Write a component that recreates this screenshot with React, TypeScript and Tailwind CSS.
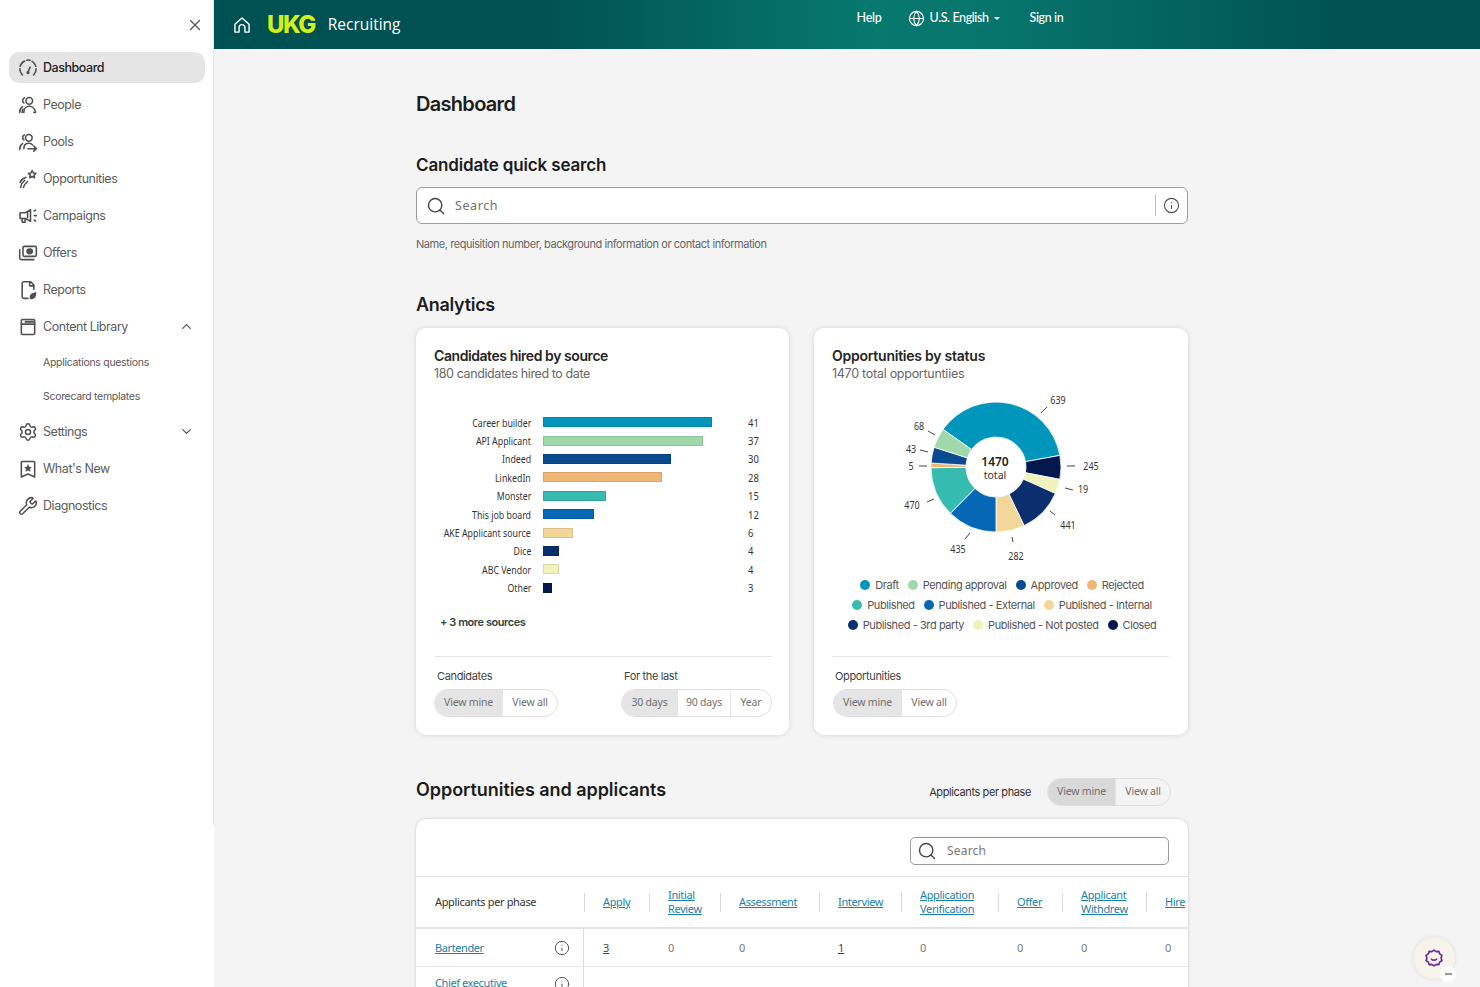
import { ChevronDown, ChevronUp, Globe, Info, Search, Settings, Wrench, X } from 'lucide-react';
import type { ReactNode } from 'react';

const uiFont = "font-['Inter',sans-serif]";
const chartFont = "font-['Noto_Sans',sans-serif]";

function Svg({ children, className = 'size-5' }: { children: ReactNode; className?: string }) {
  return (
    <svg
      viewBox="0 0 24 24"
      fill="none"
      stroke="currentColor"
      strokeWidth="1.9"
      strokeLinecap="round"
      strokeLinejoin="round"
      className={className}
    >
      {children}
    </svg>
  );
}

const icons = {
  dashboard: (
    <Svg>
      <path d="M5.200 20.200A10 10 0 0 1 2.200 13" />
      <path d="M2.600 10A10 10 0 0 1 8 3.600" />
      <path d="M10.500 2.600a10 10 0 0 1 4 .1" />
      <path d="M17 4a10 10 0 0 1 4.400 6" />
      <path d="M21.800 13a10 10 0 0 1-3 7.200" />
      <path d="M12 17l2.500-6" />
      <circle cx="12" cy="17.500" r="1" fill="currentColor" />
    </Svg>
  ),
  people: (
    <Svg>
      <circle cx="13.500" cy="7" r="4" />
      <path d="M7 21c0-4.500 2.800-7.500 6.500-7.500S20.500 16.500 21 21h-2" />
      <path d="M7.500 3.500a3.500 3.500 0 0 0-.5 6" />
      <path d="M2 21c0-3 1-5.500 3.500-7" />
      <path d="M5 21c0-1.500.5-3 1-4" />
    </Svg>
  ),
  pools: (
    <Svg>
      <circle cx="13" cy="7" r="4" />
      <path d="M7 20c0-4 2.500-6.500 6-6.500 2 0 3.500.8 4.500 2" />
      <path d="M7.500 3.500a3.500 3.500 0 0 0-.5 6" />
      <path d="M2 21c0-3 1-5.500 3.500-7" />
      <path d="M12 20h10m-3-3 3 3-3 3" />
    </Svg>
  ),
  opportunities: (
    <Svg>
      <path d="m17 2 1.400 2.800 3.100.4-2.200 2.200.5 3.100-2.800-1.500-2.800 1.500.5-3.100-2.200-2.200 3.100-.4z" />
      <path d="M3 22c.5-3 2-6 5-8.500" />
      <path d="M6.500 22c1-3 2.500-5 5-7" />
      <path d="M2.500 16c1.500-3 4-5 7-6" />
    </Svg>
  ),
  campaigns: (
    <Svg>
      <path d="M2.500 8h6.500l6-3.500v14L9 15H2.500z" />
      <path d="M5 15v4.500h3.500V15" />
      <path d="M11.500 7v7" />
      <path d="M19.500 6 21 5M19.500 11.500h2.500M19.500 17l1.500 1" />
    </Svg>
  ),
  offers: (
    <Svg>
      <rect x="6" y="4" width="16" height="12" rx="1.500" />
      <ellipse cx="14" cy="10" rx="3.200" ry="2.800" fill="currentColor" />
      <path d="M2 8v10a2 2 0 0 0 2 2h15" />
    </Svg>
  ),
  reports: (
    <Svg>
      <path d="M12 22H7a2 2 0 0 1-2-2V4a2 2 0 0 1 2-2h8l4 4v5" />
      <path d="M14 2v5h5" />
      <path d="M15 22c-.5-3 1-6 6-6.500 .5 4-1.500 7-6 6.500z" fill="currentColor" />
    </Svg>
  ),
  library: (
    <Svg>
      <rect x="4" y="3" width="16" height="18" rx="1.500" />
      <path d="M4 8.500h16" />
      <path d="M8 5.700h11" strokeWidth="2.400" strokeLinecap="butt" />
    </Svg>
  ),
  settings: <Settings className="size-5" strokeWidth={1.8} />,
  news: (
    <Svg>
      <path d="M5 3h14a1 1 0 0 1 1 1v17.500l-8-3.500-8 3.500V4a1 1 0 0 1 1-1z" />
      <path
        d="m12 7 1.300 2.600 2.800.4-2 2 .5 2.800-2.600-1.300-2.600 1.300.5-2.800-2-2 2.800-.4z"
        fill="currentColor"
        strokeWidth="0.600"
      />
    </Svg>
  ),
  diagnostics: <Wrench className="size-5" strokeWidth={1.8} />,
};

type NavEntry = {
  label: string;
  icon?: ReactNode;
  active?: boolean;
  sub?: boolean;
  chevron?: 'up' | 'down';
};

const navItems: NavEntry[] = [
  { label: 'Dashboard', icon: icons.dashboard, active: true },
  { label: 'People', icon: icons.people },
  { label: 'Pools', icon: icons.pools },
  { label: 'Opportunities', icon: icons.opportunities },
  { label: 'Campaigns', icon: icons.campaigns },
  { label: 'Offers', icon: icons.offers },
  { label: 'Reports', icon: icons.reports },
  { label: 'Content Library', icon: icons.library, chevron: 'up' },
  { label: 'Applications questions', sub: true },
  { label: 'Scorecard templates', sub: true },
  { label: 'Settings', icon: icons.settings, chevron: 'down' },
  { label: "What's New", icon: icons.news },
  { label: 'Diagnostics', icon: icons.diagnostics },
];

function Sidebar() {
  return (
    <aside className="w-[214px] shrink-0 bg-white">
      <div className="h-[825px] border-r border-[#e6e6e6] px-[9px] pr-2">
        <div className="flex h-[52px] justify-end pt-4 pr-[1px]">
          <X className="size-[18px] text-[#555]" strokeWidth={1.7} />
        </div>
        <nav className="flex flex-col gap-[6px]">
          {navItems.map((item) =>
            item.sub ? (
              <div key={item.label} className="flex h-[28px] items-center pt-[2px] pl-[34px] text-[10.5px] tracking-[-0.3px] text-[#595959]">
                {item.label}
              </div>
            ) : (
              <div
                key={item.label}
                className={
                  item.active
                    ? 'flex h-[31px] items-center rounded-[10px] bg-[#e5e5e5] pl-[9px] text-[#222] font-medium'
                    : 'flex h-[31px] items-center pl-[9px] text-[#5c5c5c]'
                }
              >
                <span className="flex w-[25px] shrink-0 text-[#505050]">{item.icon}</span>
                <span className="pt-[2px] text-[12.5px] tracking-[-0.45px]">{item.label}</span>
                {item.chevron === 'up' && <ChevronUp className="ml-auto mr-[11px] size-[15px] text-[#555]" />}
                {item.chevron === 'down' && <ChevronDown className="ml-auto mr-[11px] size-[15px] text-[#555]" />}
              </div>
            ),
          )}
        </nav>
      </div>
    </aside>
  );
}

function Header() {
  return (
    <header className="relative flex h-[49px] items-center bg-[linear-gradient(90deg,#005151_0%,#005151_25%,#07796f_52%,#07756c_62%,#005151_90%,#005151_100%)] text-white">
      <svg viewBox="0 0 24 24" fill="none" stroke="currentColor" strokeWidth="1.7" strokeLinejoin="round" className="ml-[18px] size-5">
        <path d="M3.500 11 12 3.500l8.500 7.500v9.500h-5V15a3.500 3.500 0 0 0-7 0v5.500h-5z" />
      </svg>
      <span className="ml-[15px] text-[24px] leading-none font-extrabold tracking-[-1.5px] text-[#d4f018]">UKG</span>
      <span className="ml-[13px] pt-[1px] font-['Open_Sans',sans-serif] text-[15.5px]">Recruiting</span>
      <div className="mb-[12px] ml-[456px] flex items-center font-['Lato',sans-serif] text-[12.5px] font-medium tracking-[-0.25px]">
        <span>Help</span>
        <Globe className="ml-[26px] size-[17px]" strokeWidth={1.6} />
        <span className="ml-[5px] tracking-[-0.4px]">U.S. English</span>
        <span className="ml-[5px] border-x-[3px] border-t-[3px] border-x-transparent border-t-white" />
        <span className="ml-[30px] tracking-[-0.4px]">Sign in</span>
      </div>
    </header>
  );
}

function Toggle({ options, tint = false }: { options: { label: string; width: string }[]; tint?: boolean }) {
  return (
    <div className={`flex h-[28px] w-fit overflow-hidden rounded-full border border-[#dedede] text-[10.5px] tracking-[-0.2px] text-[#707070] ${chartFont} ${tint ? '' : 'bg-white'}`}>
      {options.map((opt, i) => (
        <div
          key={opt.label}
          className={`flex items-center justify-center ${opt.width} ${i === 0 ? (tint ? 'bg-[#d9d9d9]' : 'bg-[#e5e5e5]') : 'border-l border-[#e4e4e4]'}`}
        >
          {opt.label}
        </div>
      ))}
    </div>
  );
}

const mineAll = [
  { label: 'View mine', width: 'w-[67px]' },
  { label: 'View all', width: 'w-[55px]' },
];

const sources = [
  { name: 'Career builder', value: 41, width: 169, color: '#0096bc' },
  { name: 'API Applicant', value: 37, width: 160, color: '#9fd8aa' },
  { name: 'Indeed', value: 30, width: 128, color: '#0a4a90' },
  { name: 'LinkedIn', value: 28, width: 119, color: '#efb676' },
  { name: 'Monster', value: 15, width: 63, color: '#36bbb0' },
  { name: 'This job board', value: 12, width: 51, color: '#0668b5' },
  { name: 'AKE Applicant source', value: 6, width: 30, color: '#f2d799' },
  { name: 'Dice', value: 4, width: 16, color: '#0b2f6e' },
  { name: 'ABC Vendor', value: 4, width: 16, color: '#f0f2bb' },
  { name: 'Other', value: 3, width: 9, color: '#04184d' },
];

function CandidatesCard() {
  return (
    <section className="h-[407px] w-[373px] rounded-[10px] bg-white pt-[18px] pr-[17px] pl-[18px] shadow-[0_0_5px_rgba(0,0,0,0.14)]">
      <h3 className="text-[14px] leading-[19px] font-semibold tracking-[-0.43px] text-[#252525]">Candidates hired by source</h3>
      <p className="text-[12.5px] leading-[17px] tracking-[-0.39px] text-[#666]">180 candidates hired to date</p>
      <div className={`mt-[31px] flex flex-col ${chartFont}`}>
        {sources.map((s) => (
          <div key={s.name} className="flex h-[18.4px] items-center text-[11.5px] text-[#333]">
            <span className="flex w-[97px] justify-end whitespace-nowrap">
              <span className="inline-block origin-right scale-x-[0.765]">{s.name}</span>
            </span>
            <span className="ml-3 w-[205px]">
              <span
                className="block h-[10px] border border-black/10"
                style={{ width: s.width, backgroundColor: s.color }}
              />
            </span>
            <span className="inline-block origin-left scale-x-[0.82]">{s.value}</span>
          </div>
        ))}
      </div>
      <p className="mt-[17px] pl-[6px] text-[11px] leading-[16px] font-semibold tracking-[-0.45px] text-[#2f4440]">+ 3 more sources</p>
      <div className="mt-[26px] border-t border-[#e6e6e6] pt-[12px]">
        <div className="flex justify-between">
          <div>
            <p className={`mb-[5px] pl-[3px] text-[11px] leading-[15px] tracking-[-0.35px] text-[#444] ${uiFont}`}>Candidates</p>
            <Toggle options={mineAll} />
          </div>
          <div>
            <p className={`mb-[5px] pl-[3px] text-[11px] leading-[15px] tracking-[-0.35px] text-[#444] ${uiFont}`}>For the last</p>
            <Toggle
              options={[
                { label: '30 days', width: 'w-[55px]' },
                { label: '90 days', width: 'w-[53px]' },
                { label: 'Year', width: 'w-[41px]' },
              ]}
            />
          </div>
        </div>
      </div>
    </section>
  );
}

const cx = 996 - 814;
const cy = 467 - 328 - 58;

function slicePath(start: number, end: number) {
  const R = 65;
  const r = 30;
  const pt = (rad: number, deg: number) => {
    const a = (deg * Math.PI) / 180;
    return `${(cx + rad * Math.sin(a)).toFixed(2)} ${(cy - rad * Math.cos(a)).toFixed(2)}`;
  };
  const large = end - start > 180 ? 1 : 0;
  return `M${pt(R, start)}A${R} ${R} 0 ${large} 1 ${pt(R, end)}L${pt(r, end)}A${r} ${r} 0 ${large} 0 ${pt(r, start)}Z`;
}

const slices = [
  { from: -54.6, to: 79.7, color: '#0096bc' },
  { from: 79.7, to: 101, color: '#04184d' },
  { from: 101, to: 114, color: '#f0f2bb' },
  { from: 114, to: 154.4, color: '#0b2f6e' },
  { from: 154.4, to: 180, color: '#f2d799' },
  { from: 180, to: 224.6, color: '#0668b5' },
  { from: 224.6, to: 269.4, color: '#36bbb0' },
  { from: 269.4, to: 273.5, color: '#efb676' },
  { from: 273.5, to: 287.7, color: '#0a4a90' },
  { from: 287.7, to: 305.4, color: '#9fd8aa' },
];

// label x/y and tick ends, in page pixels
const donutLabels = [
  { t: '639', x: 1058, y: 404, tick: [1047, 407, 1041, 413] },
  { t: '245', x: 1091, y: 470, tick: [1067, 466, 1075, 466] },
  { t: '19', x: 1083, y: 493, tick: [1065, 488, 1073, 490] },
  { t: '441', x: 1068, y: 529, tick: [1050, 511, 1055, 515] },
  { t: '282', x: 1016, y: 560, tick: [1012, 537, 1013, 542] },
  { t: '435', x: 958, y: 553, tick: [970, 533, 965, 539] },
  { t: '470', x: 912, y: 509, tick: [934, 499, 927, 502] },
  { t: '5', x: 911, y: 470, tick: [919, 466, 927, 466] },
  { t: '43', x: 911, y: 453, tick: [920, 450, 928, 452] },
  { t: '68', x: 919, y: 430, tick: [928, 431, 935, 435] },
];

const legendRows = [
  [
    ['Draft', '#0096bc'],
    ['Pending approval', '#9fd8aa'],
    ['Approved', '#0a4a90'],
    ['Rejected', '#efb676'],
  ],
  [
    ['Published', '#36bbb0'],
    ['Published - External', '#0668b5'],
    ['Published - Internal', '#f2d799'],
  ],
  [
    ['Published - 3rd party', '#0b2f6e'],
    ['Published - Not posted', '#f0f2bb'],
    ['Closed', '#04184d'],
  ],
];

function OpportunitiesCard() {
  return (
    <section className="h-[407px] w-[374px] rounded-[10px] bg-white pt-[18px] shadow-[0_0_5px_rgba(0,0,0,0.14)]">
      <div className="px-[18px]">
        <h3 className="text-[14px] leading-[19px] font-semibold tracking-[-0.24px] text-[#252525]">Opportunities by status</h3>
        <p className="text-[12.5px] leading-[17px] tracking-[-0.27px] text-[#666]">1470 total opportuntiies</p>
      </div>
      <svg width="374" height="188" viewBox="0 0 374 188" className="mt-[4px] block">
        {slices.map((s) => (
          <path key={s.from} d={slicePath(s.from, s.to)} fill={s.color} stroke="#fff" strokeWidth="0.8" />
        ))}
        <g transform="translate(-814 -386)">
          {donutLabels.map((l) => (
            <g key={l.t}>
              <line x1={l.tick[0]} y1={l.tick[1]} x2={l.tick[2]} y2={l.tick[3]} stroke="#444" strokeWidth="1" />
              <text
                x={l.x}
                y={l.y}
                textAnchor="middle"
                fontSize="11.500"
                fill="#333"
                fontFamily="Noto Sans"
                textLength={l.t.length * 5.1}
                lengthAdjust="spacingAndGlyphs"
              >
                {l.t}
              </text>
            </g>
          ))}
          <text x="995" y="466" textAnchor="middle" fontSize="12" fontWeight="600" fill="#222" fontFamily="Noto Sans">
            1470
          </text>
          <text x="995" y="479" textAnchor="middle" fontSize="10.500" fill="#333" fontFamily="Noto Sans">
            total
          </text>
        </g>
      </svg>
      <div className="mt-[3px] flex flex-col gap-[4px]">
        {legendRows.map((row, i) => (
          <div key={i} className="flex h-[16px] justify-center gap-[9px] pl-[2px] text-[11px] tracking-[-0.42px] text-[#555]">
            {row.map(([label, color]) => (
              <span key={label} className="flex items-center gap-[5px] whitespace-nowrap">
                <span className="size-[10px] rounded-full" style={{ backgroundColor: color }} />
                {label}
              </span>
            ))}
          </div>
        ))}
      </div>
      <div className="mx-[19px] mt-[23px] border-t border-[#e6e6e6] pt-[12px]">
        <p className={`mb-[5px] pl-[2px] text-[11px] leading-[15px] tracking-[-0.35px] text-[#444] ${uiFont}`}>Opportunities</p>
        <Toggle options={mineAll} />
      </div>
    </section>
  );
}

const phaseCols = [
  { head: ['Apply'], width: 'w-[65px]', value: '3', link: true },
  { head: ['Initial', 'Review'], width: 'w-[71px]', value: '0' },
  { head: ['Assessment'], width: 'w-[99px]', value: '0' },
  { head: ['Interview'], width: 'w-[82px]', value: '1', link: true },
  { head: ['Application', 'Verification'], width: 'w-[97px]', value: '0' },
  { head: ['Offer'], width: 'w-[64px]', value: '0' },
  { head: ['Applicant', 'Withdrew'], width: 'w-[84px]', value: '0' },
  { head: ['Hire'], width: 'w-[42px]', value: '0' },
];

function ApplicantsTable() {
  return (
    <div className={`mt-[13px] overflow-hidden rounded-t-[10px] bg-white shadow-[0_0_3px_rgba(0,0,0,0.2)] ${chartFont}`}>
      <div className="flex h-[58px] items-center justify-end border-b border-[#e4e4e4] pt-[6px] pr-[19px]">
        <div className="flex h-[28px] w-[259px] items-center rounded-[5px] border border-[#9a9a9a] pl-[6px] text-[12px] text-[#777]">
          <Search className="size-[20px] text-[#444]" strokeWidth={1.7} />
          <span className="ml-[10px] tracking-[0.2px]">Search</span>
        </div>
      </div>
      <div className="flex h-[52px] items-center border-b-2 border-[#e2e2e2] text-[11px] leading-[14px] tracking-[-0.35px]">
        <div className="w-[168px] shrink-0 pl-[19px] text-[#333]">Applicants per phase</div>
        {phaseCols.map((c) => (
          <div key={c.width + c.head[0]} className={`relative flex h-full shrink-0 flex-col justify-center pl-[19px] text-[#1a81a6] underline ${c.width}`}>
            <span className="absolute top-[16px] left-0 h-[19px] border-l border-[#d8d8d8]" />
            {c.head.map((line) => (
              <span key={line}>{line}</span>
            ))}
          </div>
        ))}
      </div>
      <div className="flex h-[38px] items-center border-b border-[#e8e8e8] text-[11px]">
        <div className="flex h-full w-[168px] shrink-0 items-center justify-between border-r border-[#dcdcdc] pr-[13px] pl-[19px]">
          <span className="pt-[2px] tracking-[-0.4px] text-[#1a81a6] underline">Bartender</span>
          <Info className="size-4 text-[#555]" strokeWidth={1.5} />
        </div>
        {phaseCols.map((c) => (
          <div key={c.width + c.head[0]} className={`shrink-0 pt-[2px] pl-[19px] ${c.width} ${c.link ? 'text-[#444] underline' : 'text-[#777]'}`}>
            {c.value}
          </div>
        ))}
      </div>
      <div className="flex h-[30px]">
        <div className="flex h-full w-[168px] shrink-0 justify-between border-r border-[#dcdcdc] pt-[9px] pr-[13px] pl-[19px] text-[11px] leading-[14px] tracking-[-0.4px]">
          <span className="whitespace-nowrap text-[#1a81a6] underline">Chief executive</span>
          <Info className="size-4 text-[#555]" strokeWidth={1.5} />
        </div>
      </div>
    </div>
  );
}

export default function App() {
  return (
    <div className={`relative flex h-[987px] w-[1480px] overflow-hidden bg-[#f4f4f4] ${uiFont}`}>
      <Sidebar />
      <div className="flex-1">
        <Header />
        <main className="ml-[202px] w-[772px] pt-[42px]">
          <h1 className="text-[20px] leading-[26px] font-semibold tracking-[-0.7px] text-[#1c1c1c]">Dashboard</h1>
          <h2 className="mt-[37px] text-[17px] leading-[22px] font-semibold tracking-[-0.15px] text-[#1c1c1c]">Candidate quick search</h2>
          <div className="mt-[11px] flex h-[37px] items-center rounded-[6px] border border-[#9c9c9c] bg-white pl-[9px] text-[#707070]">
            <Search className="size-[20px] text-[#444]" strokeWidth={1.7} />
            <span className={`ml-[9px] pt-[2px] text-[12.5px] tracking-[0.6px] ${chartFont}`}>Search</span>
            <span className="ml-auto h-[21px] border-l border-[#bbb]" />
            <Info className="mx-[7px] size-[17px] text-[#555]" strokeWidth={1.6} />
          </div>
          <p className="mt-[12px] text-[11px] leading-[16px] tracking-[-0.44px] text-[#666]">
            Name, requisition number, background information or contact information
          </p>
          <h2 className="mt-[41px] text-[18px] leading-[24px] font-semibold tracking-[-0.3px] text-[#1c1c1c]">Analytics</h2>
          <div className="mt-[11px] flex justify-between">
            <CandidatesCard />
            <OpportunitiesCard />
          </div>
          <div className="mt-[43px] flex h-[28px] items-center">
            <h2 className="mb-[6px] text-[18px] font-semibold tracking-[-0.05px] text-[#1c1c1c]">Opportunities and applicants</h2>
            <span className="mr-[16px] ml-auto text-[11px] tracking-[-0.4px] text-[#333]">Applicants per phase</span>
            <div className="mr-[17px]">
              <Toggle options={mineAll} tint />
            </div>
          </div>
          <ApplicantsTable />
        </main>
      </div>
      <div className="absolute top-[937px] left-[1413px] flex size-[42px] items-center justify-center rounded-full bg-[#f6f3ea] shadow-[0_0_4px_rgba(0,0,0,0.1)]">
        <svg viewBox="0 0 24 24" fill="none" stroke="#6b2a94" strokeWidth="2" strokeLinejoin="round" className="size-[20px]">
          <path d="m12 2.500 2.600 1.900 3.200-.4 1 3 2.700 1.900-1 3.100 1 3-2.700 1.900-1 3-3.200-.3L12 21.500l-2.600-1.900-3.200.3-1-3-2.700-1.900 1-3-1-3.100L5.200 7l1-3 3.200.4z" />
          <path d="M9 13.500c1.500 1.500 4.500 1.500 6 0" strokeLinecap="round" />
        </svg>
        <span className="absolute top-[29px] left-[27px] flex size-[16px] items-center justify-center rounded-full bg-white">
          <span className="h-[1.500px] w-[7px] bg-[#999]" />
        </span>
      </div>
    </div>
  );
}
